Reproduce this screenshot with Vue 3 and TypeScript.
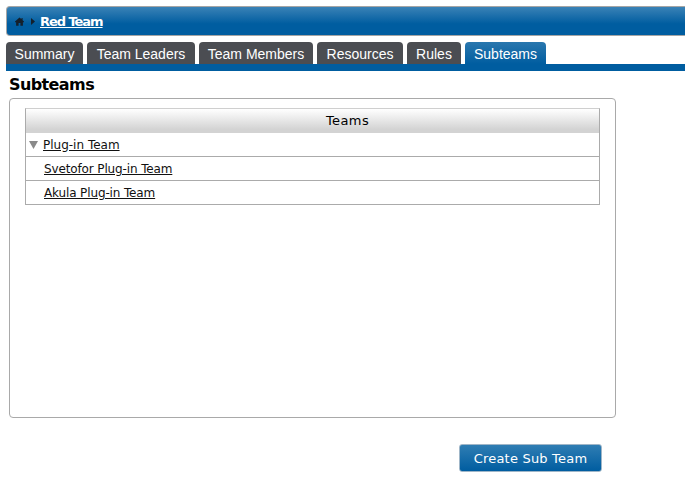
<script setup lang="ts">
interface Tab { label: string; width: number }
const tabs: Tab[] = [
  { label: 'Summary', width: 77 },
  { label: 'Team Leaders', width: 108 },
  { label: 'Team Members', width: 114 },
  { label: 'Resources', width: 86 },
  { label: 'Rules', width: 54 },
  { label: 'Subteams', width: 81 },
]
const children: string[] = ['Svetofor Plug-in Team', 'Akula Plug-in Team']
</script>

<template>
  <div class="page">
    <header class="crumb">
      <svg class="home" width="9" height="9" viewBox="0 0 9 9">
        <path d="M4.5 0.5 L6.5 2.3 V1 H7.6 V3.3 L9 4.6 V5.2 H7.9 V8.8 H5.4 V6 H3.6 V8.8 H1.1 V5.2 H0 V4.6 Z" fill="#14202c" />
      </svg>
      <svg class="sep" width="4" height="7" viewBox="0 0 4 7">
        <path d="M0 0 L4 3.5 L0 7 Z" fill="#14202c" />
      </svg>
      <a class="crumb-link" href="#">Red Team</a>
    </header>
    <nav class="tabs">
      <span
        v-for="t in tabs"
        :key="t.label"
        class="tab"
        :class="{ active: t.label === 'Subteams' }"
        :style="{ width: t.width + 'px' }"
      >{{ t.label }}</span>
    </nav>
    <div class="rule"></div>
    <h1 class="title">Subteams</h1>
    <section class="panel">
      <div class="grid">
        <div class="grid-head">Teams</div>
        <div class="row parent">
          <svg class="caret" width="9" height="8" viewBox="0 0 9 8"><path d="M0 0 H9 L4.5 8 Z" fill="#8a8a8a" /></svg>
          <a href="#">Plug-in Team</a>
        </div>
        <div v-for="c in children" :key="c" class="row child"><a href="#">{{ c }}</a></div>
      </div>
    </section>
    <div class="actions">
      <button class="create" type="button">Create Sub Team</button>
    </div>
  </div>
</template>

<style>
html, body { margin: 0; background: #fff; }
</style>

<style scoped>
.page {
  width: 685px;
  height: 484px;
  overflow: hidden;
  padding-top: 6px;
  box-sizing: border-box;
  font-family: "DejaVu Sans", sans-serif;
  color: #000;
}
.crumb {
  margin-left: 6px;
  height: 30px;
  box-sizing: border-box;
  border: 1px solid #a5a5a5;
  border-right: 0;
  border-radius: 4px 0 0 4px;
  background: linear-gradient(#3a82b6, #005da0 60%, #005da0);
  display: flex;
  align-items: center;
  padding-left: 8px;
}
.home { margin-right: 7px; }
.sep { margin-right: 5px; }
.crumb-link {
  color: #fff;
  font: bold 13px "DejaVu Sans", sans-serif;
  letter-spacing: -1.05px;
}
.tabs {
  display: flex;
  gap: 4px;
  margin: 6px 0 0 6px;
  height: 22px;
}
.tab {
  background: #4b4d52;
  color: #fff;
  font: 14px/24px "Liberation Sans", sans-serif;
  text-align: center;
  border-radius: 4px 4px 0 0;
}
.tab.active { background: linear-gradient(#2a77ae, #005da0); }
.rule { margin-left: 6px; height: 7px; background: #005da0; }
.title {
  margin: 4px 0 0 9px;
  font: bold 16px/19px "DejaVu Sans", sans-serif;
  letter-spacing: -0.6px;
}
.panel {
  margin: 4px 0 0 9px;
  width: 607px;
  height: 320px;
  box-sizing: border-box;
  border: 1px solid #a9a9a9;
  border-radius: 4px;
  padding: 9px 15px 0;
}
.grid {
  width: 575px;
  box-sizing: border-box;
  border: 1px solid #ababab;
  border-top-color: #cfcfcf;
}
.grid-head {
  height: 24px;
  padding-left: 70px;
  background: linear-gradient(#fff, #d3d3d3 85%);
  text-align: center;
  font-size: 13px;
  letter-spacing: 0.4px;
  line-height: 24px;
}
.row {
  height: 24px;
  box-sizing: border-box;
  display: flex;
  align-items: center;
  font-size: 12px;
  border-top: 1px solid #ababab;
}
.row a { color: #111; }
.parent { border-top: 0; height: 23px; padding-left: 3px; }
.caret { margin-right: 5px; }
.child { padding-left: 18px; letter-spacing: -0.13px; }
.actions {
  margin: 26px 0 0 459px;
}
.create {
  width: 143px;
  height: 28px;
  border: 1px solid #9fb6c8;
  border-radius: 3px;
  background: linear-gradient(#2f7db3, #005da0);
  color: #fff;
  font: 13px "DejaVu Sans", sans-serif;
  letter-spacing: 0.2px;
  padding: 0;
}
</style>
